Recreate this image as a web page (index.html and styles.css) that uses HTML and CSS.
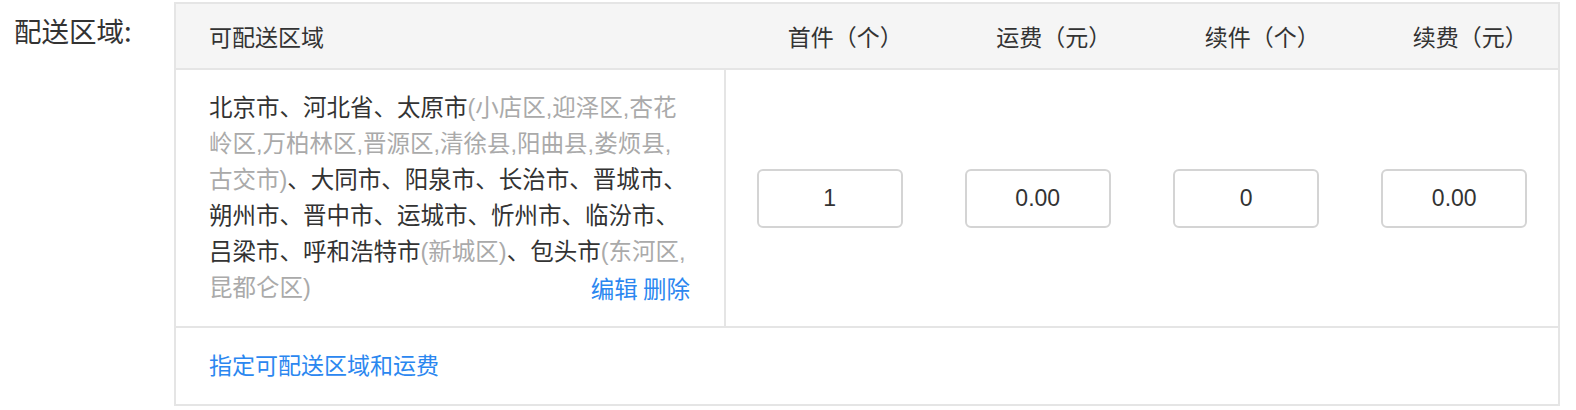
FILE: index.html
```html
<!DOCTYPE html>
<html lang="zh-CN">
<head>
<meta charset="utf-8">
<title>配送区域</title>
<link rel="stylesheet" href="styles.css">
</head>
<body>
<div class="form-row">
  <div class="form-label">配送区域:</div>
  <table class="area-table">
    <thead>
      <tr>
        <th class="col-area">可配送区域</th>
        <th class="col-num">首件（个）</th>
        <th class="col-num">运费（元）</th>
        <th class="col-num">续件（个）</th>
        <th class="col-num">续费（元）</th>
      </tr>
    </thead>
    <tbody>
      <tr class="area-row">
        <td class="area-cell">
          <p class="area-text">北京市、河北省、太原市<span class="muted">(小店区,迎泽区,杏花岭区,万柏林区,晋源区,清徐县,阳曲县,娄烦县,古交市)</span>、大同市、阳泉市、长治市、晋城市、朔州市、晋中市、运城市、忻州市、临汾市、吕梁市、呼和浩特市<span class="muted">(新城区)</span>、包头市<span class="muted">(东河区,昆都仑区)</span><span class="actions"><a href="#" class="link">编辑</a> <a href="#" class="link">删除</a></span></p>
        </td>
        <td class="num-cell"><input class="num-input" type="text" value="1"></td>
        <td class="num-cell"><input class="num-input" type="text" value="0.00"></td>
        <td class="num-cell"><input class="num-input" type="text" value="0"></td>
        <td class="num-cell"><input class="num-input" type="text" value="0.00"></td>
      </tr>
      <tr class="foot-row">
        <td class="foot-cell" colspan="5"><a href="#" class="link">指定可配送区域和运费</a></td>
      </tr>
    </tbody>
  </table>
</div>
</body>
</html>
```

FILE: styles.css
```css
* { box-sizing: border-box; }

html, body {
  margin: 0;
  padding: 0;
  background: #fff;
}

body {
  font-family: "Noto Sans CJK SC", "Noto Sans", sans-serif;
  color: #333;
}

.form-row {
  display: flex;
  align-items: flex-start;
  padding: 2px 16px 0 0;
}

.form-label {
  width: 174px;
  flex: none;
  padding: 8px 0 0 14px;
  font-size: 27.5px;
  line-height: 40px;
  color: #333;
}

.area-table {
  flex: none;
  width: 1386px;
  border-collapse: collapse;
  border: 2px solid #e5e5e5;
  table-layout: fixed;
}

.area-table thead tr {
  background: #f5f5f5;
  border-bottom: 2px solid #e5e5e5;
}

.area-table th {
  height: 66px;
  padding: 0;
  font-weight: normal;
  font-size: 23px;
  line-height: 36px;
  color: #333;
  vertical-align: middle;
}

.col-area {
  width: 550px;
  text-align: left;
  padding-left: 33px !important;
}

.col-num {
  text-align: center;
  padding-left: 32px !important;
}

.area-row {
  border-bottom: 2px solid #e5e5e5;
}

.area-cell {
  border-right: 2px solid #e5e5e5;
  padding: 20px 34px 20px 33px;
  vertical-align: top;
}

.area-text {
  margin: 0;
  font-family: "Liberation Sans", "Noto Sans CJK SC", sans-serif;
  font-size: 23.5px;
  line-height: 36px;
  color: #333;
}

.muted {
  color: #aaa;
}

.actions {
  float: right;
  font-family: "Noto Sans CJK SC", sans-serif;
}

.link {
  color: #2b87f0;
  text-decoration: none;
}

.num-cell {
  text-align: center;
  vertical-align: middle;
  padding: 0;
}

.num-input {
  width: 146px;
  height: 59px;
  border: 2px solid #d4d4d4;
  border-radius: 6px;
  text-align: center;
  font-family: "Liberation Sans", Arial, sans-serif;
  font-size: 23px;
  color: #333;
  background: #fff;
  outline: none;
  margin: 0;
  padding: 0;
}

.foot-cell {
  height: 78px;
  padding: 0 0 4px 33px;
  font-size: 23px;
  line-height: 36px;
  vertical-align: middle;
}
```
